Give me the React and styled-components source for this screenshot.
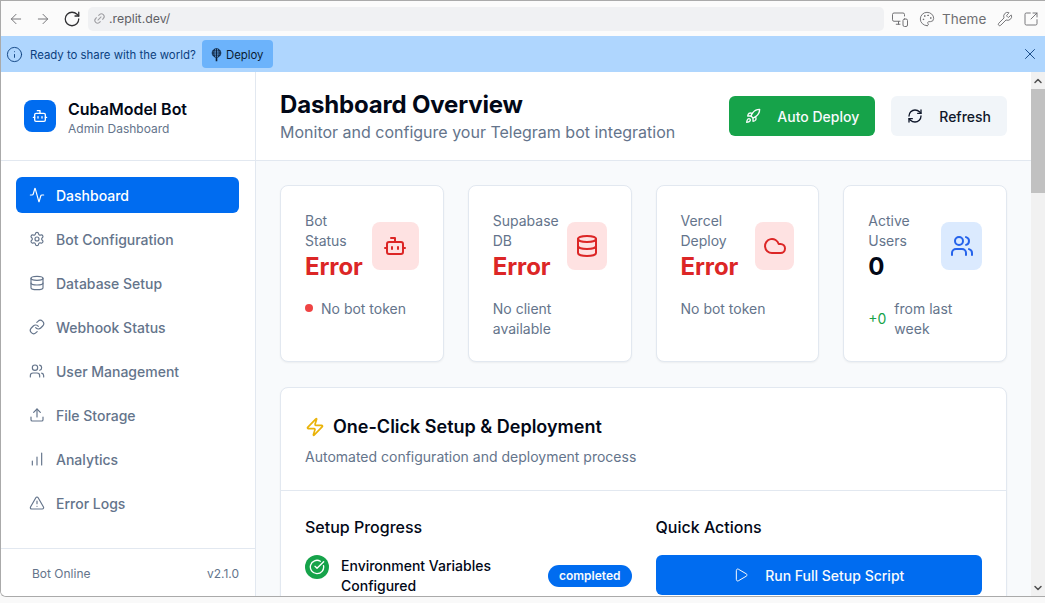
import React from "react";
import styled, { createGlobalStyle } from "styled-components";
import {
  Activity, ArrowLeft, ArrowRight, Bot, ChartNoAxesColumnIncreasing, CircleCheckBig, Cloud, Database,
  Info, Link, Link2, MonitorSmartphone, Palette, Play, RefreshCw, Rocket, RotateCw, Settings,
  SquareArrowOutUpRight, TriangleAlert, Upload, Users, Wrench, X, Zap, ChevronUp, ChevronDown,
} from "lucide-react";

const Global = createGlobalStyle`
  html, body { margin: 0; padding: 0; height: 603px; overflow: hidden; background: #f9f9f9; }
  * { box-sizing: border-box; }
  body { font-family: Inter, "Liberation Sans", sans-serif; color: #020817; }
`;

const Frame = styled.div`
  height: 597px; display: flex; flex-direction: column; overflow: hidden; background: #fff;
  border: 1px solid #aaaaaa; border-right: 0; border-radius: 0 0 0 6px;
`;
const BrowserBar = styled.div`
  height: 35px; flex: none; background: #fbfbfb; display: flex; align-items: center; padding: 0 0 0 7px; color: #6f6f72;
`;
const NavIcon = styled.span`
  width: ${(p) => p.$w}px; display: flex; color: ${(p) => p.$c || "#77777a"}; flex: none;
`;
const UrlField = styled.div`
  width: 796px; height: 24px; margin: 0 4px 0 0; background: #f0f1f3; border-radius: 5px; display: flex; align-items: center; padding-left: 5px;
  font-size: 12.3px; color: #5f6065; gap: 3px; flex: none;
`;
const UrlLink = styled(Link2)`
  transform: rotate(-45deg); color: #a0a0a4;
`;
const Tools = styled.div`
  display: flex; align-items: center; margin-left: 3px; font-size: 13.5px; color: #6f6f72;
`;
const PaletteIcon = styled(Palette)`
  margin: 0 7px 0 10px;
`;
const WrenchIcon = styled(Wrench)`
  margin: 0 10px 0 11px;
`;
const Banner = styled.div`
  height: 36px; flex: none; background: #afd6fe; display: flex; align-items: center; padding: 0 6px 0 5px; color: #0b3f7e; font-size: 11.4px;
`;
const BannerText = styled.span`
  margin-left: 7px; padding-top: 2px;
`;
const DeployBtn = styled.div`
  margin-left: 6px; height: 28px; width: 71px; border-radius: 4px; background: #6cb3fb; color: #0a1c33; display: flex; align-items: center; justify-content: center; gap: 4px;
  font-size: 11.4px; padding-top: 1px;
`;
const Spacer = styled.div`
  flex: 1;
`;
const Body = styled.div`
  flex: 1; min-height: 0; display: flex;
`;
const Sidebar = styled.aside`
  width: 255px; flex: none; border-right: 1px solid #e2e8f0; display: flex; flex-direction: column; background: #fff;
`;
const Brand = styled.div`
  height: 89px; flex: none; display: flex; align-items: center; gap: 12px; padding: 0 23px; border-bottom: 1px solid #e2e8f0;
`;
const BrandLogo = styled.div`
  width: 32px; height: 32px; border-radius: 8px; background: #006cf0; color: #fff; display: flex; align-items: center; justify-content: center; flex: none;
`;
const BrandText = styled.div`
  padding-top: 2px;
`;
const BrandName = styled.div`
  font-size: 16px; font-weight: 600; line-height: 24px; color: #020817;
`;
const BrandSub = styled.div`
  font-size: 12px; line-height: 16px; color: #64748b;
`;
const Nav = styled.nav`
  flex: 1; padding: 16px 16px 0 15px; display: flex; flex-direction: column; gap: 8px;
`;
const NavItem = styled.div`
  height: 36px; border-radius: 6px; display: flex; align-items: center; gap: 11px; padding: 0 13px; font-size: 14px; font-weight: 500; flex: none;
  background: ${(p) => (p.$active ? "#006cf0" : "transparent")};
  color: ${(p) => (p.$active ? "#fff" : "#64748b")};
`;
const SideFoot = styled.div`
  height: 48px; flex: none; border-top: 1px solid #e2e8f0; display: flex; align-items: center; justify-content: space-between; padding: 2px 16px 0 31px;
  font-size: 12px; color: #64748b;
`;
const Main = styled.main`
  flex: 1; min-width: 0; display: flex; flex-direction: column; overflow: hidden; background: #f8fafc;
`;
const Header = styled.header`
  height: 89px; flex: none; background: #fff; border-bottom: 1px solid #e2e8f0; padding: 0 24px; display: flex; align-items: center; justify-content: space-between;
`;
const Title = styled.h1`
  margin: 0 0 -1px; padding-top: 1px; font-size: 24px; line-height: 32px; font-weight: 700; letter-spacing: -0.17px; color: #020817;
`;
const Subtitle = styled.p`
  margin: 0; font-size: 16px; line-height: 24px; color: #64748b;
`;
const Actions = styled.div`
  display: flex; gap: 16px;
`;
const Button = styled.div`
  height: 40px; padding: 0 16px; border-radius: 6px; display: flex; align-items: center; gap: 16px; font-size: 14px; font-weight: 500;
  background: ${(p) => (p.$green ? "#16a34a" : "#f1f5f9")};
  color: ${(p) => (p.$green ? "#f8fafc" : "#0f172a")};
`;
const Content = styled.div`
  padding: 24px 24px 0; display: flex; flex-direction: column; gap: 25px;
`;
const Stats = styled.div`
  display: grid; grid-template-columns: repeat(4, 1fr); gap: 24px;
`;
const Card = styled.div`
  background: #fff; border: 1px solid #e2e8f0; border-radius: 8px; box-shadow: 0 1px 2px rgba(0,0,0,.05);
`;
const StatCard = styled(Card)`
  padding: 25px 24px 24px; height: 177px;
`;
const StatTop = styled.div`
  display: flex; align-items: center;
`;
const StatText = styled.div`
  flex: 1; min-width: 0;
`;
const StatLabel = styled.div`
  font-size: 14px; line-height: 20px; color: #64748b;
`;
const StatValue = styled.div`
  font-size: 24px; line-height: 32px; font-weight: 700; letter-spacing: -0.1px; color: ${(p) => (p.$error ? "#dc2626" : "#020817")};
`;
const StatIcon = styled.div`
  width: ${(p) => p.$w}px; height: 48px; flex: none; border-radius: 8px; display: flex; align-items: center; justify-content: center; position: relative; top: -1px;
  background: ${(p) => (p.$blue ? "#dbeafe" : "#fee2e2")};
  color: ${(p) => (p.$blue ? "#2563eb" : "#dc2626")};
`;
const StatFoot = styled.div`
  margin-top: 16px; display: flex; align-items: center; gap: 8px; font-size: 14px; line-height: 20px; color: #64748b;
`;
const Dot = styled.span`
  width: 8px; height: 8px; border-radius: 50%; background: #ef4444; flex: none; position: relative; top: -1px;
`;
const Delta = styled.span`
  color: #16a34a; flex: none;
`;
const SetupCard = styled(Card)`
  flex: none;
`;
const SetupHead = styled.div`
  padding: 25px 24px 23px; border-bottom: 1px solid #e2e8f0;
`;
const SetupTitle = styled.h2`
  margin: 0; display: flex; align-items: center; gap: 8px; font-size: 18px; line-height: 28px; font-weight: 600; color: #020817;
`;
const BoltIcon = styled.span`
  display: flex; color: #eab308;
`;
const SetupSub = styled.p`
  margin: 6px 0 0; font-size: 14px; line-height: 20px; color: #64748b;
`;
const SetupBody = styled.div`
  padding: 24px; display: grid; grid-template-columns: 1fr 1fr; gap: 24px;
`;
const ColTitle = styled.h3`
  margin: 0 0 16px; font-size: 16px; line-height: 24px; font-weight: 500; color: #020817;
`;
const Step = styled.div`
  display: flex; align-items: center; gap: 12px;
`;
const StepDot = styled.div`
  width: 24px; height: 24px; border-radius: 50%; background: #16a34a; color: #fff; display: flex; align-items: center; justify-content: center; flex: none; align-self: flex-start;
`;
const StepLabel = styled.div`
  flex: 1; min-width: 0; font-size: 14px; line-height: 20px; font-weight: 500; padding-top: 1px; color: #020817;
`;
const Badge = styled.span`
  flex: none; height: 22px; padding: 0 11px; border-radius: 999px; background: #006cf0; color: #f8fafc; font-size: 12px; font-weight: 600; display: flex; align-items: center;
`;
const RunButton = styled.div`
  height: 40px; border-radius: 6px; background: #006cf0; color: #f8fafc; display: flex; align-items: center; justify-content: center; gap: 16px; font-size: 14px; font-weight: 500;
`;
const Scrollbar = styled.div`
  width: 14px; flex: none; background: #f1f1f1; display: flex; flex-direction: column; color: #505050;
`;
const ScrollArrow = styled.div`
  height: 17px; flex: none; display: flex; align-items: center; justify-content: center;
`;
const Thumb = styled.div`
  height: 104px; flex: none; background: #c1c1c1;
`;

const BalloonIcon = () => (
  <svg width="11" height="14" viewBox="0 0 11 14" fill="none" stroke="#0a1c33" strokeWidth="0.9">
    <circle cx="5.5" cy="5" r="4.3" />
    <path d="M5.5 .7v8.6M1.2 5h8.6M1.8 2.9h7.4M1.8 7.1h7.4M3.5 1.2c-1 2.4-1 5.2 0 7.6M7.5 1.2c1 2.4 1 5.2 0 7.6" />
    <path d="M5.5 9.3v4" strokeWidth="1.6" />
  </svg>
);

const navItems = [
  [Activity, "Dashboard"], [Settings, "Bot Configuration"], [Database, "Database Setup"], [Link, "Webhook Status"],
  [Users, "User Management"], [Upload, "File Storage"], [ChartNoAxesColumnIncreasing, "Analytics"], [TriangleAlert, "Error Logs"],
];

const stats = [
  { label: "Bot Status", value: "Error", Icon: Bot, w: 47, foot: "No bot token", dot: true },
  { label: "Supabase DB", value: "Error", Icon: Database, w: 40, foot: "No client available" },
  { label: "Vercel Deploy", value: "Error", Icon: Cloud, w: 39, foot: "No bot token" },
  { label: "Active Users", value: "0", Icon: Users, w: 41, foot: "from last week", delta: "+0", blue: true },
];

export default function App() {
  return (
    <>
      <Global />
      <Frame>
        <BrowserBar>
          <NavIcon $w={27}><ArrowLeft size={16} strokeWidth={1.5} /></NavIcon>
          <NavIcon $w={28}><ArrowRight size={16} strokeWidth={1.5} /></NavIcon>
          <NavIcon $w={25} $c="#303033"><RotateCw size={18} strokeWidth={1.7} /></NavIcon>
          <UrlField><UrlLink size={13} /><span>.replit.dev/</span></UrlField>
          <Tools>
            <MonitorSmartphone size={18} strokeWidth={1.3} />
            <PaletteIcon size={16} strokeWidth={1.4} />
            <span>Theme</span>
            <WrenchIcon size={16} strokeWidth={1.4} />
            <SquareArrowOutUpRight size={16} strokeWidth={1.4} />
          </Tools>
        </BrowserBar>
        <Banner>
          <Info size={17} strokeWidth={1.3} />
          <BannerText>Ready to share with the world?</BannerText>
          <DeployBtn><BalloonIcon />Deploy</DeployBtn>
          <Spacer />
          <X size={18} strokeWidth={1.2} />
        </Banner>
        <Body>
          <Sidebar>
            <Brand>
              <BrandLogo><Bot size={16} /></BrandLogo>
              <BrandText>
                <BrandName>CubaModel Bot</BrandName>
                <BrandSub>Admin Dashboard</BrandSub>
              </BrandText>
            </Brand>
            <Nav>
              {navItems.map(([Icon, label], i) => (
                <NavItem key={label} $active={i === 0}><Icon size={16} strokeWidth={1.75} />{label}</NavItem>
              ))}
            </Nav>
            <SideFoot><span>Bot Online</span><span>v2.1.0</span></SideFoot>
          </Sidebar>
          <Main>
            <Header>
              <div>
                <Title>Dashboard Overview</Title>
                <Subtitle>Monitor and configure your Telegram bot integration</Subtitle>
              </div>
              <Actions>
                <Button $green><Rocket size={16} />Auto Deploy</Button>
                <Button><RefreshCw size={16} />Refresh</Button>
              </Actions>
            </Header>
            <Content>
              <Stats>
                {stats.map(({ label, value, Icon, w, foot, dot, delta, blue }) => (
                  <StatCard key={label}>
                    <StatTop>
                      <StatText>
                        <StatLabel>{label}</StatLabel>
                        <StatValue $error={value === "Error"}>{value}</StatValue>
                      </StatText>
                      <StatIcon $w={w} $blue={blue}><Icon size={24} strokeWidth={2} /></StatIcon>
                    </StatTop>
                    <StatFoot>
                      {dot && <Dot />}
                      {delta && <Delta>{delta}</Delta>}
                      <span>{foot}</span>
                    </StatFoot>
                  </StatCard>
                ))}
              </Stats>
              <SetupCard>
                <SetupHead>
                  <SetupTitle><BoltIcon><Zap size={20} /></BoltIcon>One-Click Setup &amp; Deployment</SetupTitle>
                  <SetupSub>Automated configuration and deployment process</SetupSub>
                </SetupHead>
                <SetupBody>
                  <div>
                    <ColTitle>Setup Progress</ColTitle>
                    <Step>
                      <StepDot><CircleCheckBig size={16} /></StepDot>
                      <StepLabel>Environment Variables Configured</StepLabel>
                      <Badge>completed</Badge>
                    </Step>
                  </div>
                  <div>
                    <ColTitle>Quick Actions</ColTitle>
                    <RunButton><Play size={16} strokeWidth={1.5} />Run Full Setup Script</RunButton>
                  </div>
                </SetupBody>
              </SetupCard>
            </Content>
          </Main>
          <Scrollbar>
            <ScrollArrow><ChevronUp size={12} strokeWidth={3} /></ScrollArrow>
            <Thumb />
            <Spacer />
            <ScrollArrow><ChevronDown size={12} strokeWidth={3} /></ScrollArrow>
          </Scrollbar>
        </Body>
      </Frame>
    </>
  );
}
